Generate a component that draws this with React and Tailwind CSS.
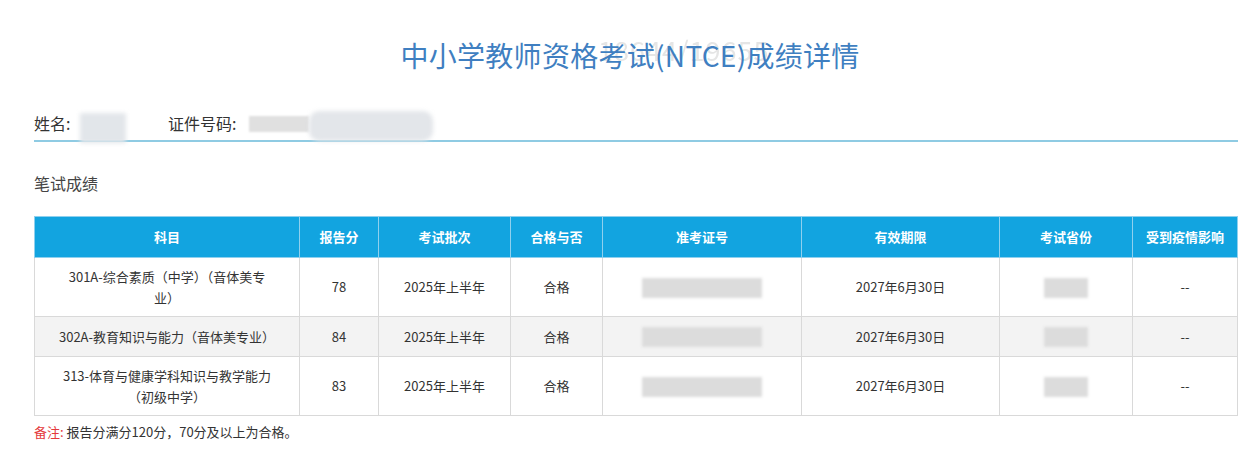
import React from "react";

const font = { fontFamily: '"Microsoft YaHei","Noto Sans CJK SC",sans-serif' };

function Blur({ w, h, className = "" }) {
  return (
    <span
      className={`inline-block align-middle bg-[#dcdcdc] blur-[1.5px] ${className}`}
      style={{ width: w, height: h }}
    />
  );
}

const rows = [
  { subj: ["301A-综合素质（中学）（音体美专", "业）"], score: "78", tall: true, bg: "bg-white" },
  { subj: ["302A-教育知识与能力（音体美专业）"], score: "84", tall: false, bg: "bg-[#f3f3f3]" },
  { subj: ["313-体育与健康学科知识与教学能力", "（初级中学）"], score: "83", tall: true, bg: "bg-white" },
];

const heads = ["科目", "报告分", "考试批次", "合格与否", "准考证号", "有效期限", "考试省份", "受到疫情影响"];
const widths = ["w-[265px]", "w-[79px]", "w-[132px]", "w-[92px]", "w-[199px]", "w-[198px]", "w-[133px]", "w-[105px]"];

export default function App() {
  return (
    <div className="w-[1260px] h-[449px] bg-white overflow-hidden" style={font}>
      <div className="relative h-[108px] flex items-center justify-center pt-[1px]">
        <span className="absolute left-[598px] top-[36px] text-[27px] text-[#d4d4d4] opacity-60 leading-none tracking-[1px]">18644/19655</span>
        <h1 className="relative text-[28px] text-[#3f7fc1] tracking-[0.3px] leading-none">中小学教师资格考试(NTCE)成绩详情</h1>
      </div>
      <div className="mx-[34px] w-[1204px]">
        <div className="flex items-end h-[34px] pb-[5px] border-b-2 border-[#8fcbe3] text-[16px] text-[#333]">
          <span>姓名:</span>
          <span className="ml-[10px] mb-[-8px] w-[46px] h-[30px] bg-[#e2e6ea] blur-[2px] inline-block" />
          <span className="ml-[8px] text-[#ccc]">&nbsp;</span>
          <span className="ml-[30px]">证件号码:</span>
          <span className="ml-[12px] mb-[3px] w-[60px] h-[16px] bg-[#e0e0e0] blur-[1px] inline-block" />
          <span className="mb-[-6px] w-[124px] h-[30px] rounded-[10px] bg-[#e3e6ea] blur-[2px] inline-block" />
        </div>
        <div className="mt-[33px] text-[16px] text-[#444] leading-none">笔试成绩</div>
        <table className="mt-[25px] border-collapse text-[13px] text-[#333] table-fixed w-[1204px]">
          <thead>
            <tr className="bg-[#12a4e0] text-white h-[41px]">
              {heads.map((h, i) => (
                <th key={h} className={`${widths[i]} border border-[#8fd0ee] font-bold text-center`}>{h}</th>
              ))}
            </tr>
          </thead>
          <tbody>
            {rows.map((r, i) => (
              <tr key={i} className={`${r.bg} ${r.tall ? "h-[59px]" : "h-[40px]"}`}>
                <td className="border border-[#d9d9d9] text-center leading-[21px] px-2">
                  {r.subj.map((s, j) => <div key={j}>{s}</div>)}
                </td>
                <td className="border border-[#d9d9d9] text-center">{r.score}</td>
                <td className="border border-[#d9d9d9] text-center">2025年上半年</td>
                <td className="border border-[#d9d9d9] text-center">合格</td>
                <td className="border border-[#d9d9d9] text-center">
                  <Blur w={120} h={20} />
                </td>
                <td className="border border-[#d9d9d9] text-center">2027年6月30日</td>
                <td className="border border-[#d9d9d9] text-center">
                  <Blur w={44} h={20} />
                </td>
                <td className="border border-[#d9d9d9] text-center">--</td>
              </tr>
            ))}
          </tbody>
        </table>
        <div className="mt-[9px] text-[13px] text-[#333] leading-none">
          <span className="text-[#e4393c]">备注:</span> 报告分满分120分，70分及以上为合格。
        </div>
      </div>
    </div>
  );
}
